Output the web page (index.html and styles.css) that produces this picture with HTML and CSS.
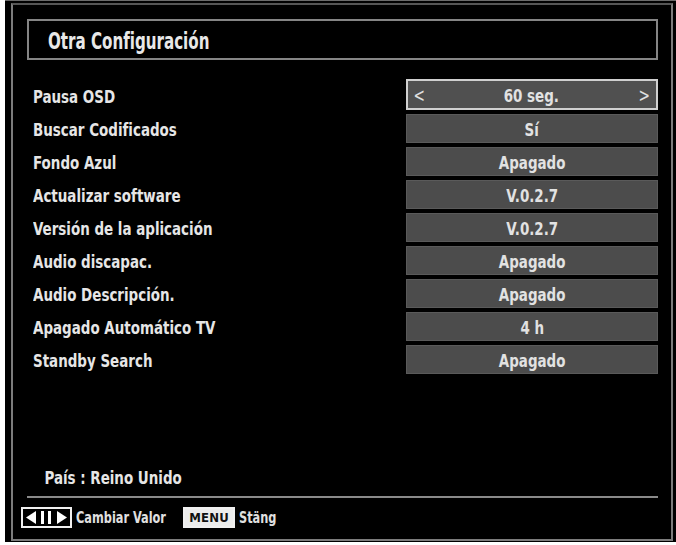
FILE: index.html
```html
<!DOCTYPE html>
<html lang="es">
<head>
<meta charset="utf-8">
<link rel="stylesheet" href="styles.css">
</head>
<body>
<div class="screen">
  <div class="frame">
    <div class="title-box"><span class="title">Otra Configuración</span></div>
    <div class="rows">
      <div class="row"><span class="label">Pausa OSD</span><span class="value selected"><span class="arrow">&lt;</span><span class="vtext">60 seg.</span><span class="arrow">&gt;</span></span></div>
      <div class="row"><span class="label">Buscar Codificados</span><span class="value"><span class="vtext">Sí</span></span></div>
      <div class="row"><span class="label">Fondo Azul</span><span class="value"><span class="vtext">Apagado</span></span></div>
      <div class="row"><span class="label">Actualizar software</span><span class="value"><span class="vtext">V.0.2.7</span></span></div>
      <div class="row"><span class="label">Versión de la aplicación</span><span class="value"><span class="vtext">V.0.2.7</span></span></div>
      <div class="row"><span class="label">Audio discapac.</span><span class="value"><span class="vtext">Apagado</span></span></div>
      <div class="row"><span class="label">Audio Descripción.</span><span class="value"><span class="vtext">Apagado</span></span></div>
      <div class="row"><span class="label">Apagado Automático TV</span><span class="value"><span class="vtext">4 h</span></span></div>
      <div class="row"><span class="label">Standby Search</span><span class="value"><span class="vtext">Apagado</span></span></div>
    </div>
    <div class="spacer"></div>
    <div class="country">País : Reino Unido</div>
    <div class="separator"></div>
    <div class="footer">
      <span class="key arrows">
        <svg width="47" height="17" viewBox="0 0 47 17">
          <polygon points="3,8.5 13,2 13,15" fill="#fff"/>
          <rect x="18" y="2" width="3" height="13" fill="#fff"/>
          <rect x="25" y="2" width="3" height="13" fill="#fff"/>
          <polygon points="44,8.5 34,2 34,15" fill="#fff"/>
        </svg>
      </span>
      <span class="hint hint-change">Cambiar Valor</span>
      <span class="key menu">MENU</span>
      <span class="hint">Stäng</span>
    </div>
  </div>
</div>
</body>
</html>
```
FILE: styles.css
```css
html, body {
  margin: 0;
  padding: 0;
  background: #ffffff;
}

body {
  width: 676px;
  height: 545px;
  overflow: hidden;
  font-family: "DejaVu Sans Condensed", "Liberation Sans", sans-serif;
}

.screen {
  margin-left: 5px;
  width: 671px;
  height: 542px;
  background: #000;
  padding-top: 2px;
  box-sizing: border-box;
  border-top: 1px solid #6a6a6a;
}

.frame {
  margin-left: 6px;
  width: 662px;
  height: 538px;
  box-sizing: border-box;
  border: 2px solid #7c7c7c;
  border-top-color: #555;
  padding: 14px 13px 11px 14px;
  display: flex;
  flex-direction: column;
}

.title-box {
  height: 41px;
  box-sizing: border-box;
  border: 2px solid #858585;
  padding-left: 19px;
  display: flex;
  align-items: center;
}

.title {
  color: #e8e8e8;
  font-size: 23px;
  font-weight: bold;
  display: inline-block;
  transform: scaleX(0.73);
  transform-origin: left center;
  margin-top: 2px;
  white-space: nowrap;
}

.rows {
  margin-top: 21px;
  display: flex;
  flex-direction: column;
  gap: 4px;
}

.row {
  height: 29px;
  display: flex;
  align-items: center;
  justify-content: space-between;
  padding-left: 6px;
}

.label {
  color: #e6e6e6;
  font-size: 18px;
  font-weight: bold;
  display: inline-block;
  transform: scaleX(0.83);
  transform-origin: left center;
  margin-top: 2px;
  white-space: nowrap;
}

.value {
  width: 252px;
  height: 29px;
  box-sizing: border-box;
  background: #4c4c4c;
  border: 1px solid #5a5a5a;
  color: #e2e2e2;
  display: flex;
  align-items: center;
  justify-content: center;
}

.vtext {
  font-size: 18px;
  font-weight: bold;
  display: inline-block;
  transform: scaleX(0.83);
  transform-origin: center center;
  margin-top: 1px;
  white-space: nowrap;
}

.value.selected {
  height: 31px;
  margin-top: -2px;
  border: 2px solid #d0d0d0;
  background: #505050;
  justify-content: space-between;
  padding: 0 5px 0 4px;
}

.arrow {
  font-size: 19px;
  color: #e0e0e0;
  display: inline-block;
  transform: scaleX(0.8);
}

.spacer {
  flex: 1;
}

.country {
  color: #e6e6e6;
  font-size: 18px;
  font-weight: bold;
  padding-left: 21px;
  line-height: 20px;
  transform: scaleX(0.83);
  transform-origin: left center;
  white-space: nowrap;
}

.separator {
  height: 2px;
  background: #8a8a8a;
  margin-top: 8px;
  margin-bottom: 9px;
}

.footer {
  display: flex;
  align-items: center;
  height: 21px;
  margin-left: -6px;
}

.key {
  box-sizing: border-box;
  height: 21px;
  border: 2px solid #f0f0f0;
  display: flex;
  align-items: center;
  justify-content: center;
}

.key.arrows {
  width: 51px;
}

.key.menu {
  width: 52px;
  margin-left: 17px;
  background: #ececec;
  color: #111;
  font-size: 13px;
  font-weight: bold;
  letter-spacing: 0.2px;
}

.hint {
  color: #e0e0e0;
  font-size: 15px;
  font-weight: bold;
  margin-left: 4px;
  display: inline-block;
  transform: scaleX(0.84);
  transform-origin: left center;
  white-space: nowrap;
}

.hint-change {
  margin-right: -17px;
}
```
